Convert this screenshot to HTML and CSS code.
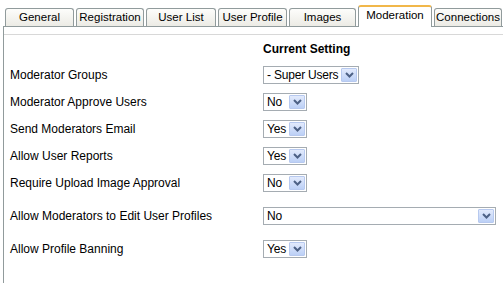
FILE: index.html
```html
<!DOCTYPE html>
<html>
<head>
<meta charset="utf-8">
<link rel="stylesheet" href="styles.css">
</head>
<body>
<div class="tabs">
  <div class="tab t1">General</div>
  <div class="tab t2">Registration</div>
  <div class="tab t3">User List</div>
  <div class="tab t4">User Profile</div>
  <div class="tab t5">Images</div>
  <div class="tab t6 active">Moderation</div>
  <div class="tab t7">Connections</div>
</div>
<div class="panel">
  <div class="inner">
    <div class="head"><span></span><span class="hcol">Current Setting</span></div>
    <div class="row"><span class="label">Moderator Groups</span><span class="sel w-groups"><span class="val">- Super Users</span><span class="btn"><svg width="9" height="6" viewBox="0 0 9 6"><polyline points="1,1 4.5,4.5 8,1" fill="none" stroke="#4d6185" stroke-width="2"/></svg></span></span></div>
    <div class="row"><span class="label">Moderator Approve Users</span><span class="sel w-small"><span class="val">No</span><span class="btn"><svg width="9" height="6" viewBox="0 0 9 6"><polyline points="1,1 4.5,4.5 8,1" fill="none" stroke="#4d6185" stroke-width="2"/></svg></span></span></div>
    <div class="row"><span class="label">Send Moderators Email</span><span class="sel w-small"><span class="val">Yes</span><span class="btn"><svg width="9" height="6" viewBox="0 0 9 6"><polyline points="1,1 4.5,4.5 8,1" fill="none" stroke="#4d6185" stroke-width="2"/></svg></span></span></div>
    <div class="row"><span class="label">Allow User Reports</span><span class="sel w-small"><span class="val">Yes</span><span class="btn"><svg width="9" height="6" viewBox="0 0 9 6"><polyline points="1,1 4.5,4.5 8,1" fill="none" stroke="#4d6185" stroke-width="2"/></svg></span></span></div>
    <div class="row"><span class="label">Require Upload Image Approval</span><span class="sel w-small"><span class="val">No</span><span class="btn"><svg width="9" height="6" viewBox="0 0 9 6"><polyline points="1,1 4.5,4.5 8,1" fill="none" stroke="#4d6185" stroke-width="2"/></svg></span></span></div>
    <div class="row gap"><span class="label">Allow Moderators to Edit User Profiles</span><span class="sel w-wide"><span class="val">No</span><span class="btn"><svg width="9" height="6" viewBox="0 0 9 6"><polyline points="1,1 4.5,4.5 8,1" fill="none" stroke="#4d6185" stroke-width="2"/></svg></span></span></div>
    <div class="row gap"><span class="label">Allow Profile Banning</span><span class="sel w-small"><span class="val">Yes</span><span class="btn"><svg width="9" height="6" viewBox="0 0 9 6"><polyline points="1,1 4.5,4.5 8,1" fill="none" stroke="#4d6185" stroke-width="2"/></svg></span></span></div>
  </div>
</div>
</body>
</html>
```
FILE: styles.css
```css
html, body {
  margin: 0;
  padding: 0;
  background: #fff;
  font-family: "Liberation Sans", Arial, sans-serif;
  font-size: 12px;
  color: #000;
}
.tabs {
  display: flex;
  align-items: flex-end;
  gap: 2px;
  padding: 5px 0 0 5px;
  height: 21px;
  position: relative;
  z-index: 1;
}
.tab {
  box-sizing: border-box;
  flex: 0 0 auto;
  white-space: nowrap;
  height: 18px;
  padding: 0;
  text-align: center;
  font-size: 11.5px;
  line-height: 17px;
  border: 1px solid #919b9c;
  border-bottom: none;
  border-radius: 3px 3px 0 0;
  background: linear-gradient(#fdfdfb, #ecebe5);
}
.t1 { width: 69px; }
.t2 { width: 68px; }
.t3 { width: 70px; }
.t4 { width: 69px; }
.t5 { width: 67px; }
.t6 { width: 74px; }
.t7 { width: 68px; }
.tab.active {
  height: 22px;
  line-height: 17px;
  background: #fff;
  border-top: 2px solid #f1b74a;
  margin-bottom: -1px;
}
.panel {
  margin-left: 3px;
  border-top: 1px solid #919b9c;
  border-left: 1px solid #919b9c;
  height: 257px;
}
.inner {
  margin-top: 7px;
  border-top: 1px solid #d8d8d8;
  padding: 9px 0 0 6px;
}
.head {
  display: grid;
  grid-template-columns: 253px auto;
  height: 17px;
  line-height: 11px;
  font-weight: bold;
}
.hcol { padding-left: 0; }
.row {
  display: grid;
  grid-template-columns: 253px auto;
  align-items: center;
  height: 27px;
}
.row.gap { margin-top: 6px; }
.label { white-space: nowrap; }
.sel {
  box-sizing: border-box;
  display: flex;
  align-items: center;
  justify-content: space-between;
  height: 18px;
  border: 1px solid #a5acb2;
  background: #fff;
  padding: 0 1px 0 3px;
}
.w-groups { width: 96px; }
.w-small { width: 44px; }
.w-wide { width: 233px; }
.val { white-space: nowrap; letter-spacing: -0.2px; }
.btn {
  box-sizing: border-box;
  width: 16px;
  height: 14px;
  border: 1px solid #b7c9ef;
  border-radius: 1px;
  background: linear-gradient(#e2eafc, #bcd0f6);
  display: flex;
  align-items: center;
  justify-content: center;
}
.btn svg { display: block; }
```
